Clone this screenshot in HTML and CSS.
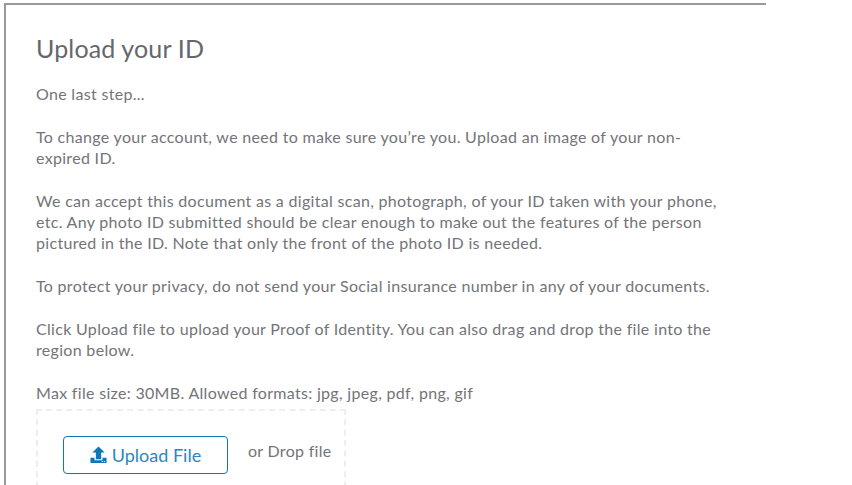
FILE: index.html
```html
<!DOCTYPE html>
<html lang="en">
<head>
    <meta charset="UTF-8">
    <meta name="viewport" content="width=device-width, initial-scale=1.0">
    <title>Upload your ID</title>
    <link rel="stylesheet" href="styles.css">
</head>
<body>
    <div class="card">
        <h1>Upload your ID</h1>
        <p>One last step...</p>
        <p>To change your account, we need to make sure you’re you. Upload an image of your non-expired ID.</p>
        <p>We can accept this document as a digital scan, photograph, of your ID taken with your phone, etc. Any photo ID submitted should be clear enough to make out the features of the person pictured in the ID. Note that only the front of the photo ID is needed.</p>
        <p>To protect your privacy, do not send your Social insurance number in any of your documents.</p>
        <p>Click Upload file to upload your Proof of Identity. You can also drag and drop the file into the region below.</p>
        <p class="limits">Max file size: 30MB. Allowed formats: jpg, jpeg, pdf, png, gif</p>
        <div class="dropzone">
            <button class="upload-btn" type="button">
                <svg class="upload-icon" viewBox="0 0 18 18" width="17" height="17" aria-hidden="true">
                    <path d="M9 0.5 L15.5 7 H11.8 V14 H6.2 V7 H2.5 Z" />
                    <path d="M0.5 12.5 H4.8 V15.2 H13.2 V12.5 H17.5 V18 H0.5 Z" />
                    <rect x="12.5" y="16" width="1.2" height="1" fill="#fff" />
                    <rect x="14.6" y="16" width="1.2" height="1" fill="#fff" />
                </svg>
                Upload File
            </button>
            <span class="drop-label">or Drop file</span>
        </div>
    </div>
</body>
</html>
```

FILE: styles.css
```css
html, body { height: 100%; }
body { margin: 0; background: #fff; overflow: hidden; font-family: "Lato", "Open Sans", sans-serif; color: #737479; }
.card { width: 762px; height: 482px; overflow: hidden; box-sizing: border-box; margin: 3px 0 0 4px; padding: 27px 32px 0 30px; border-top: 2px solid #999; border-left: 2px solid #999; }
h1 { margin: 0 0 19px; font-size: 25px; letter-spacing: 0.15px; line-height: 32px; font-weight: 400; color: #66676c; }
p { margin: 0 0 21.33px; width: 690px; font-size: 16px; letter-spacing: 0.31px; line-height: 21.33px; }
.limits { margin-bottom: 6px; }
.dropzone { display: flex; align-items: flex-start; width: 310px; height: 120px; box-sizing: border-box; padding: 25px 0 0 25px; border: 2px dashed #eee; }
.upload-btn { display: flex; align-items: center; justify-content: center; gap: 5px; width: 165px; height: 38px; padding: 0; background: #fff; border: 1px solid #0d77b7; border-radius: 4px; color: #2a87c0; font: inherit; font-size: 18px; }
.upload-icon { fill: #0d77b7; }
.drop-label { margin: 4px 0 0 20px; font-size: 16px; letter-spacing: 0.3px; line-height: 21px; }
```
